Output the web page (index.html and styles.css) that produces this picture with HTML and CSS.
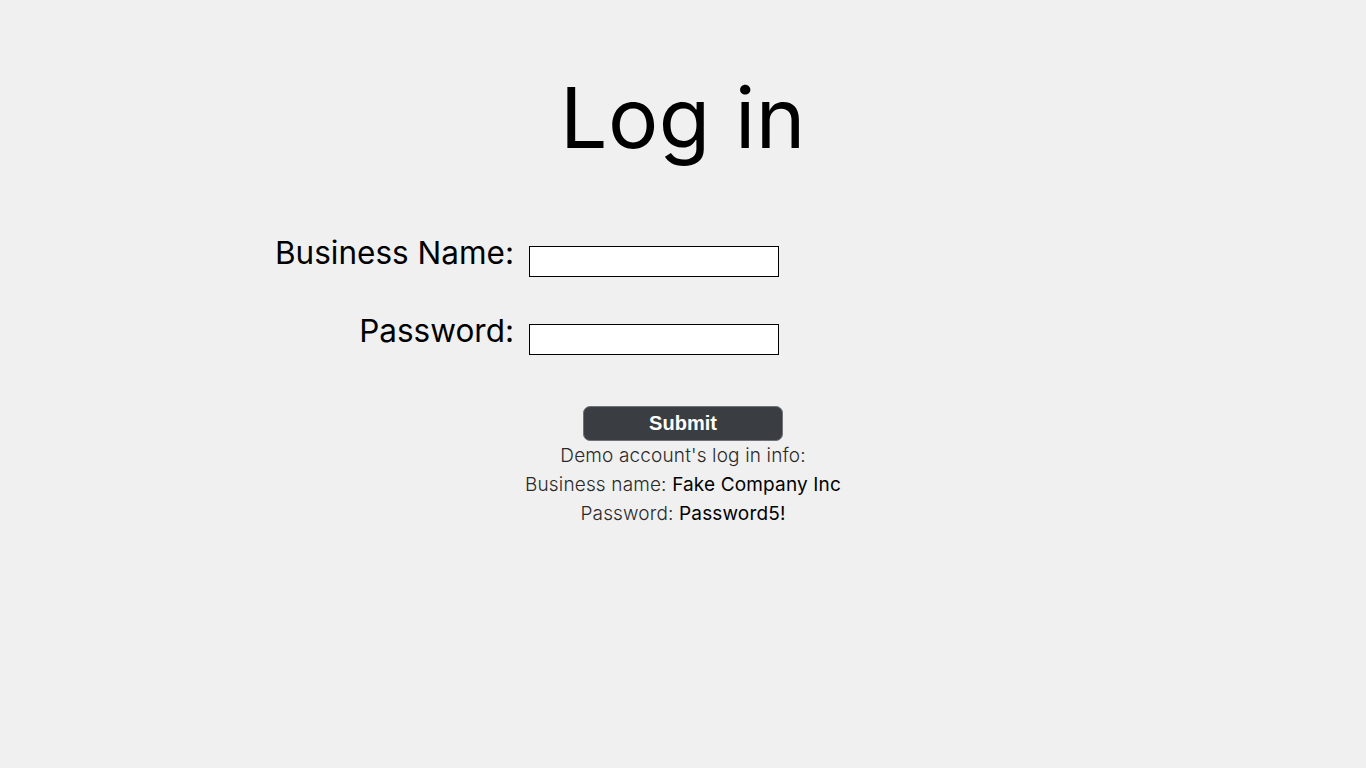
FILE: index.html
```html
<!DOCTYPE html>
<html lang="en">
<head>
<meta charset="utf-8">
<title>Log in</title>
<link rel="stylesheet" href="styles.css">
</head>
<body>
<main class="page">
  <h1 class="title">Log in</h1>
  <form class="login-form">
    <div class="fields">
      <label class="field-label" for="biz">Business Name:</label>
      <input class="field-input" id="biz" type="text">
      <label class="field-label" for="pw">Password:</label>
      <input class="field-input" id="pw" type="password">
    </div>
    <button class="submit" type="button">Submit</button>
  </form>
  <div class="demo">
    <p class="demo-line">Demo account's log in info:</p>
    <p class="demo-line">Business name: <span class="demo-value">Fake Company Inc</span></p>
    <p class="demo-line">Password: <span class="demo-value">Password5!</span></p>
  </div>
</main>
</body>
</html>
```
FILE: styles.css
```css
html, body {
  margin: 0;
  padding: 0;
  background: #f0f0f0;
}
body {
  font-family: Inter, "Noto Sans", sans-serif;
  color: #000;
}
.page {
  display: flex;
  flex-direction: column;
  align-items: center;
  padding-top: 68px;
}
.title {
  margin: 0;
  font-size: 84px;
  font-weight: 400;
  line-height: 100px;
  letter-spacing: 0.5px;
}
.login-form {
  display: flex;
  flex-direction: column;
  align-items: center;
  width: 100%;
  margin-top: 78px;
}
.fields {
  align-self: flex-start;
  display: grid;
  grid-template-columns: 514px 250px;
  column-gap: 15px;
  row-gap: 47px;
}
.field-label {
  text-align: right;
  font-size: 31.5px;
  line-height: 36px;
  margin-top: -11px;
}
.field-input {
  box-sizing: border-box;
  width: 250px;
  height: 31px;
  margin: 0;
  border: 1px solid #000;
  background: #fff;
  padding: 0 4px;
  font: 16px Inter, sans-serif;
}
.submit {
  margin-top: 51px;
  width: 200px;
  height: 35px;
  box-sizing: border-box;
  border: 1px solid #6f7378;
  border-radius: 7px;
  background: #3a3e43;
  color: #fff;
  font-family: "Liberation Sans", Arial, sans-serif;
  font-weight: 700;
  font-size: 20px;
  padding: 0;
}
.demo {
  margin-top: 0;
  text-align: center;
}
.demo-line {
  margin: 0;
  font-size: 19px;
  line-height: 29px;
  font-weight: 300;
  letter-spacing: 0.15px;
  color: #2a2a2a;
}
.demo-value {
  font-weight: 400;
  color: #000;
}
```
